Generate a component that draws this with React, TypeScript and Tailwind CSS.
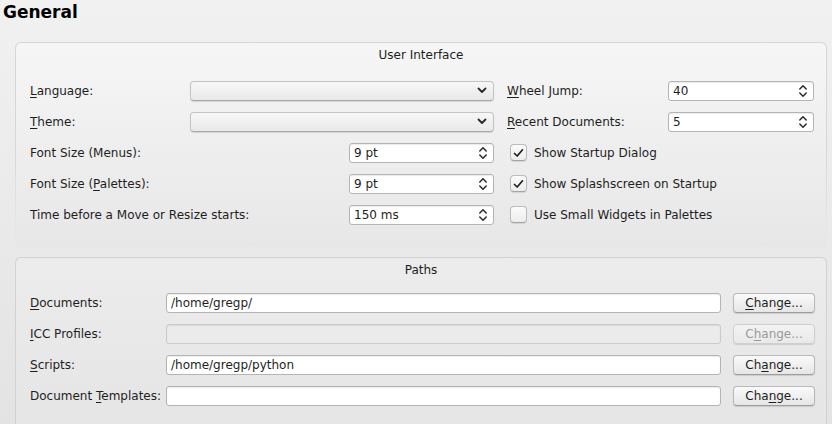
import React from 'react';

// 下線付きのニーモニック文字
function Mn({ text, at }: { text: string; at: number }) {
  if (at < 0) return <>{text}</>;
  return (
    <>
      {text.slice(0, at)}
      <span className="underline underline-offset-2">{text[at]}</span>
      {text.slice(at + 1)}
    </>
  );
}

function ChevronDown() {
  return (
    <svg width="10" height="7" viewBox="0 0 10 7" className="shrink-0">
      <path d="M1.5 1.5 L5 5 L8.5 1.5" fill="none" stroke="#2a2a2a" strokeWidth="1.8" strokeLinecap="round" strokeLinejoin="round" />
    </svg>
  );
}

function SpinArrows() {
  return (
    <svg width="10" height="14" viewBox="0 0 10 14" className="shrink-0">
      <path d="M1.8 5 L5 1.8 L8.2 5" fill="none" stroke="#2a2a2a" strokeWidth="1.5" strokeLinecap="round" strokeLinejoin="round" />
      <path d="M1.8 9 L5 12.2 L8.2 9" fill="none" stroke="#2a2a2a" strokeWidth="1.5" strokeLinecap="round" strokeLinejoin="round" />
    </svg>
  );
}

function Combo() {
  return (
    <div className="flex h-[20px] w-[304px] shrink-0 items-center justify-end rounded-[4px] border border-[#c4c4c4] border-b-[#a8a8a8] bg-gradient-to-b from-[#f7f7f7] to-[#e9e9e9] pr-[6px] shadow-[0_1px_1px_rgba(0,0,0,0.12)]">
      <ChevronDown />
    </div>
  );
}

function Spin({ value, w }: { value: string; w: string }) {
  return (
    <div className={`flex h-[20px] ${w} shrink-0 items-center rounded-[3px] border border-[#b4b4b4] bg-white pl-[4px] pr-[5px] shadow-[inset_0_1px_1px_rgba(0,0,0,0.08)]`}>
      <span className="flex-1 leading-none">{value}</span>
      <SpinArrows />
    </div>
  );
}

function Check({ checked, label }: { checked: boolean; label: string }) {
  return (
    <div className="flex items-center gap-[7px] pl-[3px]">
      <div className="flex h-[17px] w-[17px] items-center justify-center rounded-[4px] border border-[#bcbcbc] border-b-[#a4a4a4] bg-gradient-to-b from-[#fbfbfb] to-[#ececec] shadow-[0_1px_1px_rgba(0,0,0,0.1)]">
        {checked && (
          <svg width="11" height="10" viewBox="0 0 11 10">
            <path d="M1.5 5.5 L4.2 8 L9.5 1.8" fill="none" stroke="#1e1e1e" strokeWidth="1.7" strokeLinecap="round" strokeLinejoin="round" />
          </svg>
        )}
      </div>
      <span>{label}</span>
    </div>
  );
}

function PathRow({ label, at, value, btnAt, disabled }: { label: string; at: number; value: string; btnAt: number; disabled?: boolean }) {
  return (
    <div className="flex h-[31px] items-center">
      <span className="w-[136px] shrink-0">
        <Mn text={label} at={at} />
      </span>
      <div
        className={`flex h-[20px] w-[555px] shrink-0 items-center rounded-[3px] border pl-[4px] shadow-[inset_0_1px_1px_rgba(0,0,0,0.08)] ${
          disabled ? 'border-[#cacaca] bg-[#ebebeb]' : 'border-[#b4b4b4] bg-white'
        }`}
      >
        {value}
      </div>
      <div
        className={`ml-[12px] flex h-[20px] w-[82px] shrink-0 items-center justify-center rounded-[4px] border bg-gradient-to-b shadow-[0_1px_1px_rgba(0,0,0,0.12)] ${
          disabled
            ? 'border-[#cfcfcf] from-[#f3f3f3] to-[#e9e9e9] text-[#9a9a9a]'
            : 'border-[#b8b8b8] border-b-[#9c9c9c] from-[#fafafa] to-[#e6e6e6]'
        }`}
      >
        <Mn text="Change..." at={btnAt} />
      </div>
    </div>
  );
}

export default function App() {
  return (
    <div
      className="h-[424px] w-[832px] overflow-hidden bg-gradient-to-b from-[#f1f1f1] to-[#e3e3e3] text-[12px] text-[#1e1e1e]"
      style={{ fontFamily: '"DejaVu Sans", "Liberation Sans", sans-serif' }}
    >
      <h1 className="pl-[3px] pt-[1px] text-[17px] font-bold leading-[22px] text-black">General</h1>

      {/* User Interface グループ */}
      <div className="ml-[15px] mr-[5px] mt-[19px] h-[205px] rounded-t-[6px] bg-gradient-to-b from-[#d6d6d6] via-[#d6d6d6] to-transparent px-px pt-px">
        <div className="h-full rounded-t-[5px] bg-gradient-to-b from-[#f6f6f6] to-[#e7e7e7] pl-[14px] pr-[10px]">
          <div className="pt-[3px] pr-[4px] text-center leading-[18px]">User Interface</div>
          <div className="pt-[11px]">
            {/* 行 1 */}
            <div className="flex h-[31px] items-center">
              <div className="flex w-[464px] items-center justify-between">
                <span><Mn text="Language:" at={0} /></span>
                <Combo />
              </div>
              <div className="ml-[13px] flex w-[307px] items-center justify-between">
                <span><Mn text="Wheel Jump:" at={0} /></span>
                <Spin value="40" w="w-[146px]" />
              </div>
            </div>
            {/* 行 2 */}
            <div className="flex h-[31px] items-center">
              <div className="flex w-[464px] items-center justify-between">
                <span><Mn text="Theme:" at={0} /></span>
                <Combo />
              </div>
              <div className="ml-[13px] flex w-[307px] items-center justify-between">
                <span><Mn text="Recent Documents:" at={0} /></span>
                <Spin value="5" w="w-[146px]" />
              </div>
            </div>
            {/* 行 3 */}
            <div className="flex h-[31px] items-center">
              <div className="flex w-[464px] items-center justify-between">
                <span>Font Size (Menus):</span>
                <Spin value="9 pt" w="w-[145px]" />
              </div>
              <div className="ml-[13px]">
                <Check checked label="Show Startup Dialog" />
              </div>
            </div>
            {/* 行 4 */}
            <div className="flex h-[31px] items-center">
              <div className="flex w-[464px] items-center justify-between">
                <span><Mn text="Font Size (Palettes):" at={11} /></span>
                <Spin value="9 pt" w="w-[145px]" />
              </div>
              <div className="ml-[13px]">
                <Check checked label="Show Splashscreen on Startup" />
              </div>
            </div>
            {/* 行 5 */}
            <div className="flex h-[31px] items-center">
              <div className="flex w-[464px] items-center justify-between">
                <span>Time before a Move or Resize starts:</span>
                <Spin value="150 ms" w="w-[145px]" />
              </div>
              <div className="ml-[13px]">
                <Check checked={false} label="Use Small Widgets in Palettes" />
              </div>
            </div>
          </div>
        </div>
      </div>

      {/* Paths グループ */}
      <div className="ml-[15px] mr-[5px] mt-[10px] h-[200px] rounded-t-[6px] bg-[#d2d2d2] px-px pt-px">
        <div className="h-full rounded-t-[5px] bg-gradient-to-b from-[#ececec] to-[#e4e4e4] pl-[14px] pr-[10px]">
          <div className="pt-[3px] pr-[4px] text-center leading-[18px]">Paths</div>
          <div className="pt-[8px]">
            <PathRow label="Documents:" at={0} value="/home/gregp/" btnAt={0} />
            <PathRow label="ICC Profiles:" at={0} value="" btnAt={1} disabled />
            <PathRow label="Scripts:" at={0} value="/home/gregp/python" btnAt={2} />
            <PathRow label="Document Templates:" at={9} value="" btnAt={3} />
          </div>
        </div>
      </div>
    </div>
  );
}
